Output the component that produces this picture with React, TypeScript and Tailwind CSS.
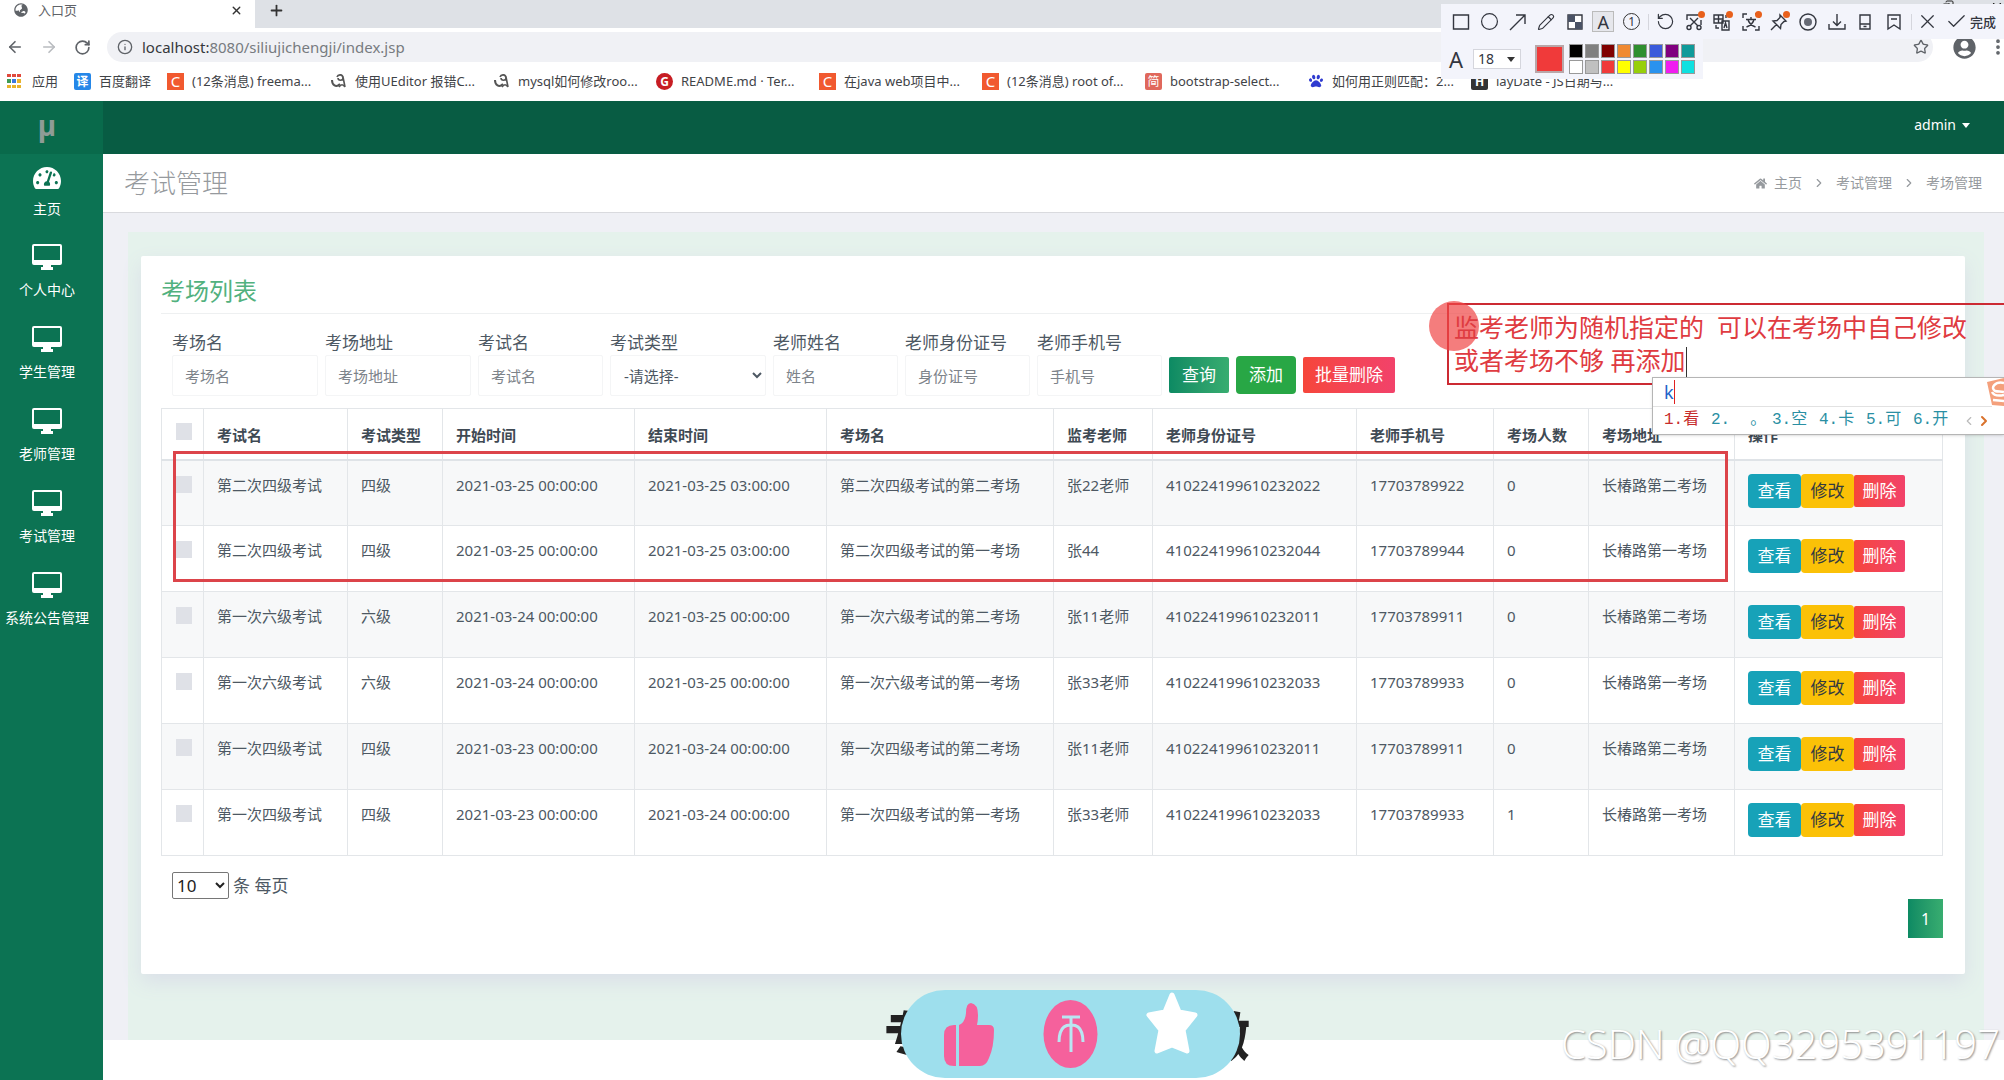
import { useState } from 'react'
import {
  ArrowLeft,
  ArrowRight,
  Check,
  ChevronLeft,
  ChevronRight,
  Circle,
  Copy,
  Info,
  MoreVertical,
  Pencil,
  Plus,
  RotateCcw,
  RotateCw,
  Star,
  X,
} from 'lucide-react'
import { FaGlobeAsia, FaHome, FaPaw, FaTachometerAlt, FaUserCircle } from 'react-icons/fa'

const bookmarks = [
  { title: '(12条消息) freema...', icon: 'c' },
  { title: '使用UEditor 报错C...', icon: 'ua' },
  { title: 'mysql如何修改roo...', icon: 'ua' },
  { title: 'README.md · Ter...', icon: 'g' },
  { title: '在java web项目中...', icon: 'c' },
  { title: '(12条消息) root of...', icon: 'c' },
  { title: 'bootstrap-select...', icon: 'jian' },
  { title: '如何用正则匹配：2...', icon: 'paw' },
  { title: 'layDate - JS日期与...', icon: 'h' },
]

const menu = ['个人中心', '学生管理', '老师管理', '考试管理', '系统公告管理']

const columns = [
  { title: '考试名', width: 'w-[144px]' },
  { title: '考试类型', width: 'w-[95px]' },
  { title: '开始时间', width: 'w-[192px]' },
  { title: '结束时间', width: 'w-[192px]' },
  { title: '考场名', width: 'w-[227px]' },
  { title: '监考老师', width: 'w-[99px]' },
  { title: '老师身份证号', width: 'w-[204px]' },
  { title: '老师手机号', width: 'w-[137px]' },
  { title: '考场人数', width: 'w-[95px]' },
  { title: '考场地址', width: 'w-[146px]' },
  { title: '操作', width: 'w-[208px]' },
]

const rows = [
  ['第二次四级考试', '四级', '2021-03-25 00:00:00', '2021-03-25 03:00:00', '第二次四级考试的第二考场', '张22老师', '410224199610232022', '17703789922', '0', '长椿路第二考场'],
  ['第二次四级考试', '四级', '2021-03-25 00:00:00', '2021-03-25 03:00:00', '第二次四级考试的第一考场', '张44', '410224199610232044', '17703789944', '0', '长椿路第一考场'],
  ['第一次六级考试', '六级', '2021-03-24 00:00:00', '2021-03-25 00:00:00', '第一次六级考试的第二考场', '张11老师', '410224199610232011', '17703789911', '0', '长椿路第二考场'],
  ['第一次六级考试', '六级', '2021-03-24 00:00:00', '2021-03-25 00:00:00', '第一次六级考试的第一考场', '张33老师', '410224199610232033', '17703789933', '0', '长椿路第一考场'],
  ['第一次四级考试', '四级', '2021-03-23 00:00:00', '2021-03-24 00:00:00', '第一次四级考试的第二考场', '张11老师', '410224199610232011', '17703789911', '0', '长椿路第二考场'],
  ['第一次四级考试', '四级', '2021-03-23 00:00:00', '2021-03-24 00:00:00', '第一次四级考试的第一考场', '张33老师', '410224199610232033', '17703789933', '1', '长椿路第一考场'],
]

const swatches = [
  'bg-black', 'bg-[#808080]', 'bg-[#800000]', 'bg-[#f08a32]', 'bg-[#2f8f2f]', 'bg-[#3b5bdb]', 'bg-[#800080]', 'bg-[#0f9a9a]',
  'bg-white', 'bg-[#c0c0c0]', 'bg-[#f03a3a]', 'bg-[#ffff00]', 'bg-[#97cf0a]', 'bg-[#2a92ee]', 'bg-[#f01cf0]', 'bg-[#10e0e0]',
]

function BookmarkIcon({ icon }: { icon: string }) {
  if (icon === 'c') {
    return <span className="w-[17px] h-[17px] bg-[#f1592f] text-white text-[15px] leading-[17px] text-center">C</span>
  }
  if (icon === 'g') {
    return <span className="w-[17px] h-[17px] rounded-full bg-[#c71d23] text-white text-xs font-bold leading-[17px] text-center">G</span>
  }
  if (icon === 'jian') {
    return <span className="w-[17px] h-[17px] rounded-xs bg-[#e0685c] text-white text-xs leading-[17px] text-center">简</span>
  }
  if (icon === 'h') {
    return <span className="w-[17px] h-[17px] rounded-xs bg-[#333] text-white text-xs font-bold leading-[17px] text-center">H</span>
  }
  if (icon === 'paw') {
    return <FaPaw className="w-[14px] h-[14px] mx-px text-[#2f3bd0]" />
  }
  return (
    <svg className="w-[17px] h-[17px]" viewBox="0 0 17 17" fill="none" stroke="#555" strokeWidth="2">
      <path d="M2 7c0 5 4 8 8 4" />
      <path d="M7 4c1-3 6-3 6 1 0 3-5 3-5 0M13 4l2 10M9 14c2-3 4-3 6 0" strokeWidth="1.6" />
    </svg>
  )
}

function BrowserBar() {
  return (
    <div className="bg-white text-[#5f6368]">
      <div className="flex h-7 bg-[#dee1e6]">
        <div className="flex items-center w-[255px] h-7 pb-2 pl-[14px] pr-3 bg-white">
          <FaGlobeAsia className="w-[14px] h-[14px]" />
          <span className="ml-[10px] text-[13px] leading-5">入口页</span>
          <button aria-label="关闭标签页" className="ml-auto text-[#333]"><X size={13} strokeWidth={2.5} /></button>
        </div>
        <button aria-label="新标签页" className="ml-[13px] pb-2 text-[#333]"><Plus size={17} strokeWidth={2.5} /></button>
        <div className="flex items-start gap-9 ml-auto text-[#222]">
          <button aria-label="还原"><Copy size={12} className="-scale-x-100" /></button>
          <button aria-label="关闭"><X size={14} /></button>
        </div>
      </div>
      <div className="flex items-center h-[37px] pt-1 pb-[3px] pl-[6px]">
        <button aria-label="后退"><ArrowLeft size={18} strokeWidth={2.2} /></button>
        <button aria-label="前进" className="ml-4 text-[#b9bcc0]"><ArrowRight size={18} strokeWidth={2.2} /></button>
        <button aria-label="刷新" className="ml-4"><RotateCw size={17} strokeWidth={2.4} /></button>
        <div className="flex flex-1 items-center h-[30px] ml-4 pl-[10px] pr-1 rounded-full bg-[#f0f1f5]">
          <Info size={16} />
          <span className="ml-[9px] pb-px text-[15px] leading-5 text-[#777b80]">
            <span className="text-[#35383c]">localhost:</span>8080/siliujichengji/index.jsp
          </span>
          <button aria-label="收藏" className="ml-auto"><Star size={16} /></button>
        </div>
        <button aria-label="用户" className="ml-5"><FaUserCircle size={23} /></button>
        <button aria-label="更多" className="ml-3 -mr-1"><MoreVertical size={20} strokeWidth={2.5} /></button>
      </div>
      <div className="flex items-center h-9 pb-1 pl-[7px] text-[13px] leading-5 text-[#3f4347] whitespace-nowrap">
        <a href="#apps" className="flex items-center gap-[11px] w-[67px]">
          <svg className="w-[14px] h-[14px]" viewBox="0 0 14 14">
            <path fill="#e0493c" d="M0 0h4v3H0zM5 0h4v3H5zM10 0h4v3h-4z" />
            <path fill="#3e9b54" d="M0 5h4v4H0z" />
            <path fill="#3b78e0" d="M5 5h4v4H5z" />
            <path fill="#e8b32c" d="M10 5h4v4h-4zM0 11h4v3H0zM5 11h4v3H5zM10 11h4v3h-4z" />
          </svg>
          应用
        </a>
        <a href="#fanyi" className="flex items-center gap-[8px] w-[93px]">
          <span className="w-[17px] h-[17px] rounded-xs bg-[#2587e8] text-white text-xs font-bold leading-[17px] text-center">译</span>
          百度翻译
        </a>
        {bookmarks.map((b) => (
          <a key={b.title} href="#bookmark" className="flex items-center gap-[8px] w-[163px]">
            <BookmarkIcon icon={b.icon} />
            {b.title}
          </a>
        ))}
      </div>
    </div>
  )
}

function DesktopIcon() {
  return (
    <svg className="w-[30px] h-[26px]" viewBox="0 0 30 26" fill="currentColor">
      <path fillRule="evenodd" d="M2 0h26q2 0 2 2v17q0 2-2 2h-9v2h2v3H9v-3h2v-2H2q-2 0-2-2V2q0-2 2-2zM2 2v14h26V2z" />
    </svg>
  )
}

function Sidebar() {
  return (
    <nav className="w-[103px] shrink-0 bg-[#0c7353] text-white">
      <div className="h-[53px] pr-[9px] bg-[#096a4b] text-center text-[28px] font-bold leading-[49px] text-[#8f9c96]">µ</div>
      <div className="flex flex-col pr-[9px] text-sm leading-5">
        <a href="#home" className="flex flex-col items-center gap-[8px] h-[80px] pt-[11px]">
          <FaTachometerAlt className="w-[28px] h-[26px]" />
          主页
        </a>
        {menu.map((m) => (
          <a key={m} href="#menu" className="flex flex-col items-center gap-[10px] h-[82px] pt-[10px] whitespace-nowrap">
            <DesktopIcon />
            {m}
          </a>
        ))}
      </div>
    </nav>
  )
}

function Field({ id, label, placeholder, width }: { id: string; label: string; placeholder: string; width: string }) {
  return (
    <div className={width}>
      <label htmlFor={id} className="block text-[17px] leading-6">{label}</label>
      <input
        id={id}
        placeholder={placeholder}
        className="w-full h-[41px] px-3 border border-[#f4f5f6] rounded-xs text-[15px] placeholder:text-[#7d838a]"
      />
    </div>
  )
}

function SearchForm() {
  return (
    <form className="flex items-end gap-[7px] pt-[17px] pl-[11px]" onSubmit={(e) => e.preventDefault()}>
      <Field id="room" label="考场名" placeholder="考场名" width="w-[146px]" />
      <Field id="address" label="考场地址" placeholder="考场地址" width="w-[146px]" />
      <Field id="exam" label="考试名" placeholder="考试名" width="w-[125px]" />
      <div className="w-[156px]">
        <label htmlFor="type" className="block text-[17px] leading-6">考试类型</label>
        <select id="type" className="w-full h-[41px] pl-[9px] border border-[#f4f5f6] rounded-xs bg-white text-[15px]">
          <option>-请选择-</option>
        </select>
      </div>
      <Field id="teacher" label="老师姓名" placeholder="姓名" width="w-[125px]" />
      <Field id="idcard" label="老师身份证号" placeholder="身份证号" width="w-[125px]" />
      <Field id="phone" label="老师手机号" placeholder="手机号" width="w-[125px]" />
      <div className="flex items-center gap-[7px] h-[41px] pb-[2px] text-[17px] leading-6 text-white">
        <button className="h-9 px-[13px] rounded-xs bg-linear-to-r from-[#0c8a63] to-[#38ad70]">查询</button>
        <button className="h-[38px] px-[13px] rounded-sm bg-[#28a745]">添加</button>
        <button className="h-9 px-[12px] rounded-xs bg-linear-to-r from-[#f6463a] to-[#f2426a]">批量删除</button>
      </div>
    </form>
  )
}

function Box({ label }: { label: string }) {
  return <input type="checkbox" aria-label={label} className="block appearance-none w-4 h-[17px] bg-[#dfe1e7]" />
}

function ExamTable() {
  return (
    <div className="relative mt-3">
      <table className="w-full table-fixed border-collapse text-[15px] leading-6 text-left whitespace-nowrap">
        <thead>
          <tr className="h-[51px] border-b-2 border-[#dfe3e7] align-top text-[#3f4a54]">
            <th className="w-[42px] pt-[14px] pl-[14px] border border-[#e3e6e9]"><Box label="全选" /></th>
            {columns.map((c) => (
              <th key={c.title} className={`${c.width} pt-[14px] pl-[13px] border border-[#e3e6e9] font-semibold`}>{c.title}</th>
            ))}
          </tr>
        </thead>
        <tbody>
          {rows.map((row, i) => (
            <tr key={i} className="h-[66px] align-top odd:bg-[#f7f8f9]">
              <td className="pt-[15px] pl-[14px] border border-[#e3e6e9]"><Box label={row[4]} /></td>
              {row.map((cell, j) => (
                <td key={j} className="pt-[12px] pl-[13px] border border-[#e3e6e9]">{cell}</td>
              ))}
              <td className="pt-[13px] pl-[13px] border border-[#e3e6e9]">
                <div className="flex items-center text-[17px]">
                  <button className="w-[53px] h-[34px] rounded-sm bg-[#17a2b8] text-white">查看</button>
                  <button className="w-[53px] h-[34px] rounded-sm bg-[#fbc107] text-[#343a40]">修改</button>
                  <button className="w-[51px] h-8 rounded-xs bg-linear-to-r from-[#f6463a] to-[#f2426a] text-white">删除</button>
                </div>
              </td>
            </tr>
          ))}
        </tbody>
      </table>
      {/* marks the two newly created rooms */}
      <div className="absolute left-3 right-[215px] top-[43px] h-[131px] border-3 border-[#dc444a]"></div>
    </div>
  )
}

function ToolIcon({ d, children }: { d?: string; children?: any }) {
  return (
    <svg width="20" height="20" viewBox="0 0 20 20" fill="none" stroke="#33363f" strokeWidth="1.4">
      {d && <path d={d} />}
      {children}
    </svg>
  )
}

function Dot({ children }: { children: any }) {
  return (
    <span className="relative">
      {children}
      <span className="absolute -top-px -right-px w-[7px] h-[7px] rounded-full bg-[#e8601c]"></span>
    </span>
  )
}

const drawTools = [
  <ToolIcon d="M2.500 3h15v14h-15z" />,
  <Circle size={19} strokeWidth={1.5} />,
  <ToolIcon d="M2 18L17 3M8 3h9v9" />,
  <Pencil size={18} strokeWidth={1.5} />,
  <ToolIcon>
    <path d="M3 3h14v14H3z" fill="#fff" />
    <path d="M3 3h7v7H3zM10 10h7v7h-7z" fill="#4a5265" stroke="none" />
  </ToolIcon>,
  <span className="w-[22px] h-[21px] border border-[#bbb] bg-[#e6e7ec] text-lg leading-5 text-center">A</span>,
  <span className="flex items-center justify-center w-[17px] h-[17px] border border-[#333] rounded-full text-xs leading-3">1</span>,
]

const captureTools = [
  <RotateCcw size={19} strokeWidth={1.5} />,
  <Dot>
    <ToolIcon d="M3 8V3h12M6 6l8 8M14 6l-8 8M17 8v5">
      <circle cx="5" cy="15.500" r="2" />
      <circle cx="15" cy="15.500" r="2" />
    </ToolIcon>
  </Dot>,
  <Dot>
    <ToolIcon d="M2 3h9v8H2zM2 7h9M6.500 3v8M10 9h7v9h-7zM12 16l1.500-5 1.500 5M4 13v3h3M14 6V3" />
  </Dot>,
  <Dot>
    <ToolIcon d="M2 6V2h4M14 2h4v4M18 14v4h-4M6 18H2v-4M5 7.500h10M10 5v2.500M13 7.500q-1 5-7.500 7.500M7 7.500q1 5 7.500 7.500" />
  </Dot>,
  <Dot>
    <ToolIcon d="M11 3l6 6-2 .5-3 3-.5 4L4 9l4-.5 3-3zM7.500 12.500L2 18" />
  </Dot>,
  <ToolIcon>
    <circle cx="10" cy="10" r="8" />
    <circle cx="10" cy="10" r="4" fill="#666a75" stroke="none" />
  </ToolIcon>,
  <ToolIcon d="M2 12v5h16v-5M10 2v11M6 9.500l4 4 4-4" />,
  <ToolIcon d="M5 3h10v14H5zM5 12h10M8.500 14.500h3" />,
  <ToolIcon d="M4 3h12v14l-6-4-6 4zM7 7h6" />,
]

function CaptureToolbar() {
  return (
    <div className="absolute top-1 right-0 w-[563px] text-[#33363f]">
      <div className="flex items-center h-[35px] pl-[6px] bg-[#f3f4fb]">
        <div className="flex justify-around w-[199px]">
          {drawTools.map((icon, i) => (
            <button key={i} aria-label="绘图工具" className="flex items-center justify-center w-7 h-7">{icon}</button>
          ))}
        </div>
        <span className="w-px h-4 mx-[2px] bg-[#d5d6dd]"></span>
        <div className="flex justify-around w-[257px]">
          {captureTools.map((icon, i) => (
            <button key={i} aria-label="截图工具" className="flex items-center justify-center w-7 h-7">{icon}</button>
          ))}
        </div>
        <span className="w-px h-4 ml-[3px] bg-[#d5d6dd]"></span>
        <button aria-label="取消" className="ml-1"><X size={23} strokeWidth={1.3} /></button>
        <button className="flex items-center gap-[2px] ml-auto mr-2 text-[13px] font-medium leading-5">
          <Check size={23} strokeWidth={1.3} />
          完成
        </button>
      </div>
      <div className="flex items-center w-[262px] h-10 pl-2 bg-[#f3f4fb]">
        <span className="w-[24px] text-[22px] leading-7">A</span>
        <span className="relative w-12">
          <select aria-label="字号" className="block w-12 h-5 pl-1 appearance-none border border-[#d5d6dd] bg-white text-sm leading-4">
            <option>18</option>
          </select>
          <svg className="absolute right-[6px] top-[8px]" width="8" height="5" viewBox="0 0 8 5"><path d="M0 0h8L4 5z" fill="#333" /></svg>
        </span>
        <button aria-label="当前颜色" className="w-[29px] h-7 ml-[14px] border-2 border-[#b9a7a9] bg-[#f03a3a]"></button>
        <div className="grid grid-cols-8 gap-[2px] ml-[5px]">
          {swatches.map((s) => (
            <button key={s} aria-label="颜色" className={`w-[14px] h-[14px] border border-[#999] ${s}`}></button>
          ))}
        </div>
      </div>
    </div>
  )
}

function Annotation() {
  return (
    <div className="absolute top-[303px] right-0 w-[557px] h-[82px] pt-[6px] pl-[5px] border-2 border-r-0 border-[#cc2a33] text-[25px] leading-[33px] text-[#df3b41] whitespace-pre">
      <span className="absolute -left-5 -top-1 w-[50px] h-[50px] rounded-full bg-[#f04646]/70"></span>
      <p className="relative">监考老师为随机指定的{'  '}可以在考场中自己修改</p>
      <p className="relative">或者考场不够 再添加<span className="inline-block w-px h-8 bg-[#333] align-middle"></span></p>
    </div>
  )
}

function InputMethod() {
  const words = ['空', '卡', '可', '开']
  return (
    <div className="absolute top-[377px] right-0 w-[352px] border border-r-0 border-[#b5b5b5] bg-white shadow-sm text-base leading-[27px] whitespace-pre font-['Liberation_Mono','Noto_Sans_CJK_SC',monospace]">
      <div className="flex items-center h-7 pl-[11px] text-lg font-['Noto_Sans',sans-serif] text-[#1c63c8]">
        k<span className="w-px h-6 bg-[#e02020]"></span>
        <svg className="ml-auto" width="18" height="28" viewBox="0 0 18 28">
          <path d="M1 4l17-4v28l-12-1z" fill="#f4a07c" />
          <path d="M18 5c-9-2-14 5-9 8 3 1 6 0 9 1M6 14c2 4 7 4 12 3M7 22l11 1" fill="none" stroke="#fff" strokeWidth="2.5" />
        </svg>
      </div>
      <div className="flex items-center h-7 mr-3 pl-[11px] border-t border-[#e2e2e2] text-[#2a8fa3]">
        <span className="w-[47px] text-[#c72c2c]">1.看</span>
        <span className="flex w-[61px]">2.<span className="ml-5">。</span></span>
        {words.map((w, i) => (
          <span key={w} className="w-[47px]">{i + 3}.{w}</span>
        ))}
        <span className="flex items-center ml-auto">
          <ChevronLeft size={14} className="text-[#bbb]" />
          <ChevronRight size={16} strokeWidth={3} className="text-[#d9722c]" />
        </span>
      </div>
    </div>
  )
}

function LikeBanner() {
  return (
    <div className="absolute left-[884px] top-[990px] w-[366px] h-[88px] text-[#222]">
      <div className="flex items-center justify-between h-full pt-1 text-[52px] font-black leading-none">
        <span>专</span>
        <span>做</span>
      </div>
      <div className="absolute inset-y-0 left-[17px] right-[10px] rounded-full bg-[#9edfed]">
        <svg className="w-full h-full" viewBox="0 0 339 88">
          <g fill="#f5619c">
            <path d="M53 35h2v41h-2q-10 0-10-10V45q0-10 10-10z" />
            <path d="M58 76V35q6-2 7-12 0-10 5-10 7 1 7 12 0 6-1 10h12q5 0 5 5 0 17-5 28-3 8-9 8z" />
            <ellipse cx="169.500" cy="44" rx="27" ry="34" />
          </g>
          <path d="M161 27h18M170 27v35M158 52c0-18 10-17 12-17s12-1 12 17" fill="none" stroke="#b9e6f2" strokeWidth="3" />
          <path
            d="M271 5l7 17 16 3-12 15 4 21-15-6-15 6 4-21-12-15 16-3z"
            fill="#fff"
            stroke="#fff"
            strokeWidth="5"
            strokeLinejoin="round"
          />
        </svg>
      </div>
    </div>
  )
}

export default function App() {
  const [pageSize, setPageSize] = useState('10')

  return (
    <div className="relative flex flex-col min-h-screen overflow-hidden bg-white text-[#4d5863] font-['Noto_Sans','Noto_Sans_CJK_SC',sans-serif]">
      <BrowserBar />
      <div className="flex flex-1">
        <Sidebar />
        <div className="flex-1 min-w-0">
          <header className="flex items-center justify-end h-[53px] pr-[34px] pb-[5px] bg-[#085c43]">
            <button className="flex items-center gap-[6px] text-sm text-white">
              admin
              <svg width="8" height="5" viewBox="0 0 8 5"><path d="M0 0h8L4 5z" fill="#fff" /></svg>
            </button>
          </header>
          <div className="flex items-center justify-between h-[59px] pl-[21px] pr-[22px] border-b border-[#d9dade] text-[#969a9e]">
            <h1 className="text-[26px] font-light leading-9">考试管理</h1>
            <div className="flex items-center text-sm leading-5">
              <FaHome className="mr-[7px]" size={13} />
              <a href="#home">主页</a>
              <ChevronRight className="mx-[10px]" size={14} />
              <a href="#exam">考试管理</a>
              <ChevronRight className="mx-[10px]" size={14} />
              <a href="#room">考场管理</a>
            </div>
          </div>
          <main className="pt-[19px] pl-[25px] pr-5 bg-[#eff0f5]">
            <div className="pt-6 pb-[66px] pl-[13px] pr-[19px] bg-[#e5f2ec]">
              <section className="pt-5 pb-9 pl-5 pr-[22px] rounded-xs bg-white shadow-[0_8px_20px_#dadfe8]">
                <h2 className="pb-[7px] border-b border-[#eef0f1] text-2xl leading-[30px] text-[#52b17e]">考场列表</h2>
                <SearchForm />
                <ExamTable />
                <div className="flex items-center mt-4 pl-[11px] text-[17px] leading-[27px]">
                  <select
                    id="size"
                    value={pageSize}
                    onChange={(e) => setPageSize(e.target.value)}
                    className="w-[57px] h-[27px] mr-1 border border-[#767676] rounded-xs bg-white text-[#222]"
                  >
                    <option>10</option>
                    <option>20</option>
                    <option>50</option>
                  </select>
                  <label htmlFor="size">条 每页</label>
                </div>
                <div className="flex justify-end">
                  <button className="w-[35px] h-[39px] bg-linear-to-r from-[#0c8a63] to-[#38ad70] text-base text-white">1</button>
                </div>
              </section>
            </div>
          </main>
        </div>
      </div>

      <CaptureToolbar />
      <Annotation />
      <InputMethod />
      <LikeBanner />
      <div className="absolute right-1 top-[1019px] text-[40px] leading-[50px] text-white [text-shadow:1px_1px_2px_#888] font-['Open_Sans',sans-serif] font-light">
        CSDN @QQ3295391197
      </div>
    </div>
  )
}
